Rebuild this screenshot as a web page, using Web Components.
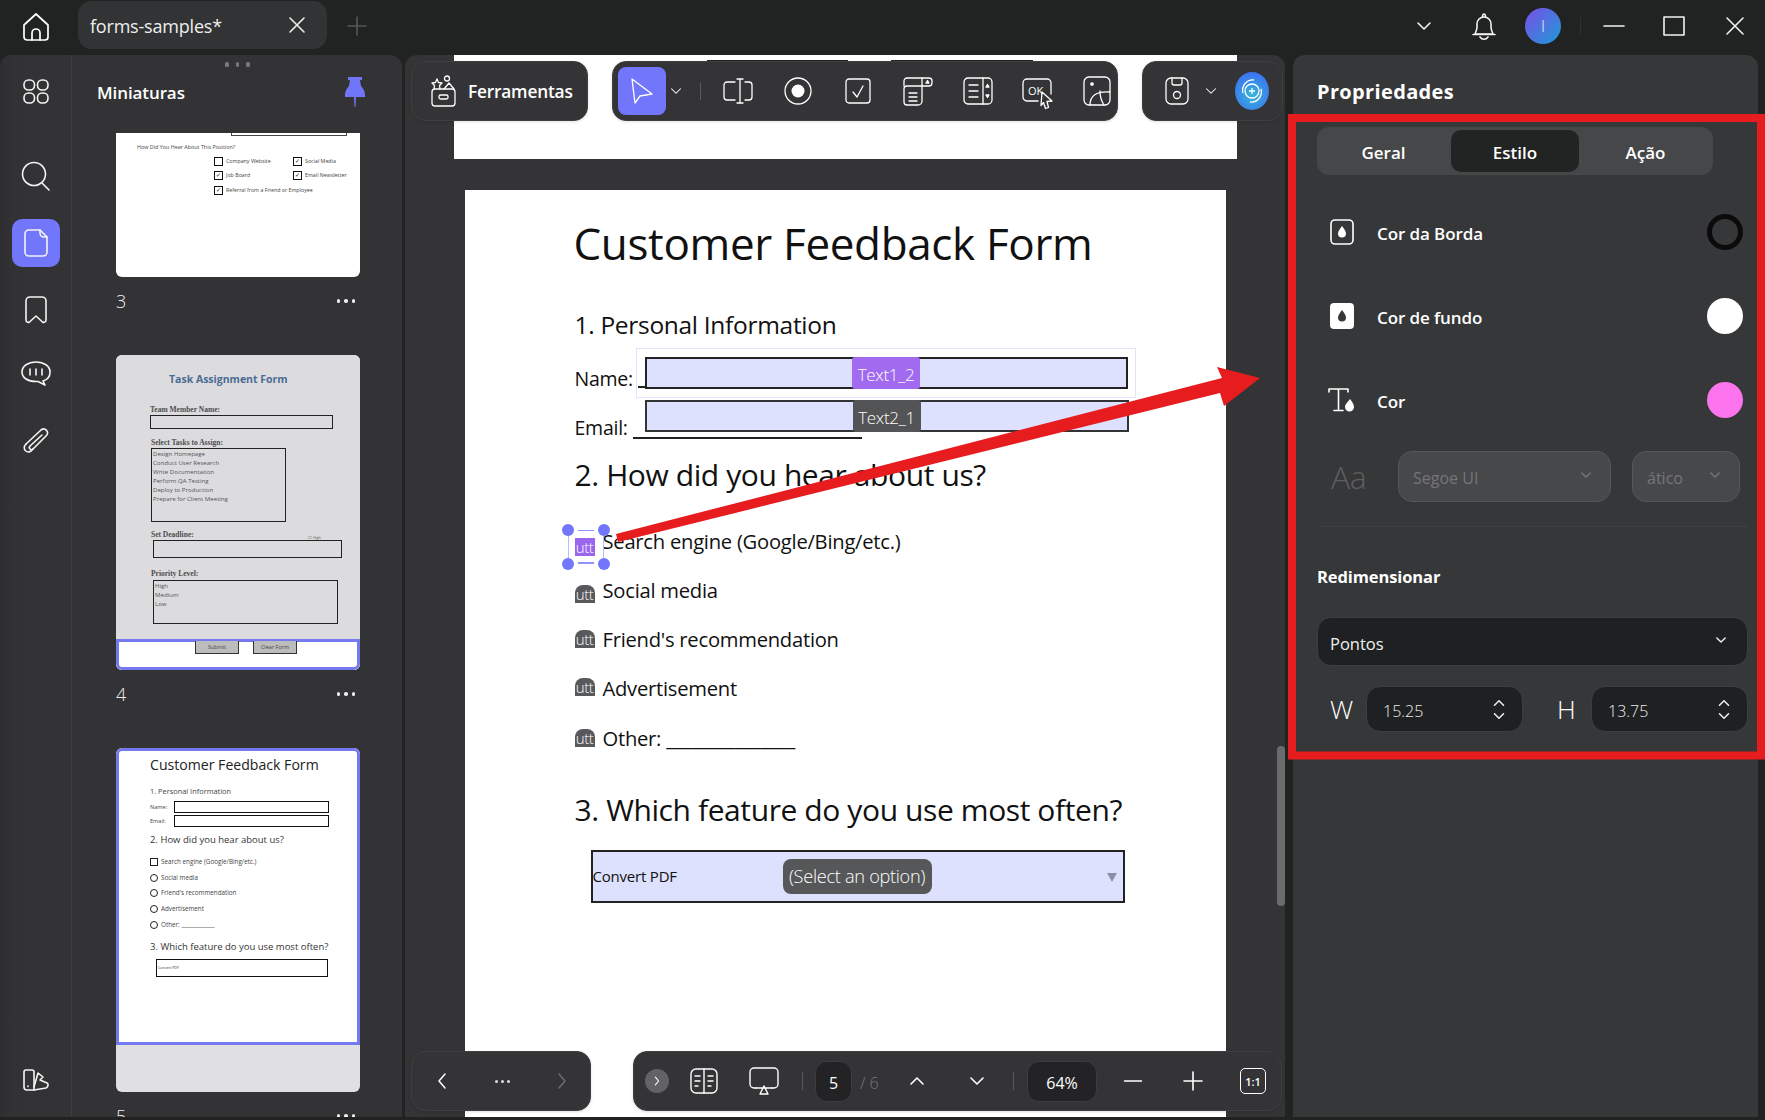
<!DOCTYPE html>
<html lang="pt">
<head>
<meta charset="utf-8">
<title>forms-samples</title>
<style>
  html, body { margin: 0; padding: 0; background: #212222; }
  body { font-family: "Open Sans", "Noto Sans", sans-serif; color: #fff; overflow: hidden; }
</style>
</head>
<body>
<app-shell></app-shell>
<script>
const ICONS = {
  home: [30, 30, '<path d="M3 13 15 2l12 11v12a3 3 0 0 1-3 3H6a3 3 0 0 1-3-3Z"/><path d="M11 28v-7a4 4 0 0 1 8 0v7"/>'],
  grid: [26, 25, '<rect x="1" y="1" width="10.5" height="10" rx="4.5"/><rect x="14.5" y="1" width="10.5" height="10" rx="4.5"/><rect x="1" y="14" width="10.5" height="10" rx="4.5"/><rect x="14.5" y="14" width="10.5" height="10" rx="4.5"/>'],
  search: [30, 30, '<circle cx="13" cy="13" r="11.5"/><path d="m21 22 7 7"/>'],
  page: [24, 28, '<path d="M5 1h11l7 7v15a4 4 0 0 1-4 4H5a4 4 0 0 1-4-4V5a4 4 0 0 1 4-4Z"/><path d="M16 1v3a4 4 0 0 0 4 4h3"/>'],
  bookmark: [22, 28, '<path d="M1 24V5a4 4 0 0 1 4-4h12a4 4 0 0 1 4 4v19c0 2-2 3-3.500 2L11 20l-6.500 6C3 27 1 26 1 24Z"/>'],
  comment: [30, 28, '<path d="M15 2c8 0 14 4 14 10 0 5-3 8-7 9l2 4-7-3.500h-2C7 21.500 1 18 1 12 1 6 7 2 15 2Z"/><path d="M9 9v6M15 9v6M21 9v6"/>'],
  clip: [28, 30, '<path d="m4 18 15-14c4-3 9 2 5 6L11 23c-2 2-5-1-3-3L20 9"/><path d="M4 18c-5 5 2 12 7 5"/>'],
  fan: [26, 26, '<path d="M3 3h6a2 2 0 0 1 2 2v18H4a3 3 0 0 1-3-3V5a2 2 0 0 1 2-2Z"/><path d="M11 20 15 6l5 4-3 3 7 3c2 1 1 4-1 5l-12 2"/><path d="M5 19v.5"/>'],
  x: [18, 18, '<path d="m2 2 14 14M16 2 2 16"/>'],
  plus: [20, 20, '<path d="M10 1v18M1 10h18"/>'],
  chevd: [16, 10, '<path d="m2 2 6 6 6-6"/>'],
  chevu: [16, 10, '<path d="m2 8 6-6 6 6"/>'],
  chevl: [10, 18, '<path d="M8 2 2 9l6 7"/>'],
  chevr: [10, 18, '<path d="m2 2 6 7-6 7"/>'],
  bell: [24, 30, '<path d="M3 23c1-2 2-4 2-7v-3a7 7 0 0 1 14 0v3c0 3 1 5 2 7Z"/><path d="M1 23.500h22M8 26c2 3 6 3 8 0M10.500 6c0-4 3-4 3 0"/>'],
  min: [22, 4, '<path d="M1 2h20"/>'],
  max: [22, 20, '<rect x="1" y="1" width="20" height="18"/>'],
  win: [18, 18, '<path d="m1 1 16 16M17 1 1 17"/>'],
  tools: [28, 32, '<rect x="3" y="14" width="23" height="17" rx="3"/><rect x="10" y="20" width="9" height="4" rx="1.500"/><path d="M8 4 9.500 7.500 13 8l-2.500 2.500.5 3.500M8 4 6.500 7.500 3 8l2.500 2.500L5 14"/><circle cx="18" cy="3.500" r="2.500"/><path d="m15 14 5-6 5 6"/>'],
  cursor: [24, 28, '<path d="M2 2 22 17 10 19 5 26Z"/>'],
  field: [32, 26, '<path d="M13 4H5a3 3 0 0 0-3 3v12a3 3 0 0 0 3 3h8M23 4h4a3 3 0 0 1 3 3v12a3 3 0 0 1-3 3h-4M18 1v24M15 1h6M15 25h6"/>'],
  radio: [28, 28, '<circle cx="14" cy="14" r="13"/><circle cx="14" cy="14" r="6.500" fill="currentColor" stroke="none"/>'],
  check: [26, 26, '<rect x="1" y="1" width="24" height="24" rx="3"/><path d="m8 14 4 5 6-11"/>'],
  combo: [30, 30, '<path d="M19 10H4a3 3 0 0 0-3 3v13a3 3 0 0 0 3 3h11a4 4 0 0 0 4-4V2h7a3 3 0 0 1 3 3v2a3 3 0 0 1-3 3h-7"/><path d="M1 10V5a3 3 0 0 1 3-3h15M6 17h8M6 21h8M6 25h8"/><path d="m23 7 1.500-2.500L26 7Z" fill="currentColor"/>'],
  list: [30, 28, '<rect x="1" y="1" width="28" height="26" rx="4"/><path d="M20 1v26M6 8h9M6 14h9M6 20h9"/><path d="m23 10 1.500-2.500L26 10ZM23 18l1.500 2.500L26 18Z" fill="currentColor"/>'],
  okbtn: [32, 32, '<path d="M16 23H5a4 4 0 0 1-4-4V5a4 4 0 0 1 4-4h20a4 4 0 0 1 4 4v11"/><text x="6" y="17" font-size="11" fill="currentColor" stroke="none" font-family="Open Sans, sans-serif">OK</text><path d="m20 14 10 9-5 .5 1.500 6-3 1-2-6-2.500 3Z" fill="#343436"/>'],
  image: [28, 30, '<rect x="1" y="1" width="26" height="28" rx="5"/><circle cx="9" cy="8" r="1.200" fill="currentColor"/><path d="M7 29c0-9 6-14 20-13M17 15c0 5 2 11 4 14"/>'],
  save: [24, 28, '<rect x="1" y="1" width="22" height="26" rx="5"/><path d="M7 1v5a2 2 0 0 0 2 2h6a2 2 0 0 0 2-2V1"/><circle cx="12" cy="18" r="3.500"/>'],
  book: [28, 26, '<rect x="1" y="1" width="26" height="24" rx="5"/><path d="M14 1v24M5 8h5M5 13h5M5 18h3M18 8h5M18 13h5M18 18h3"/>'],
  present: [30, 28, '<path d="M7 21H5a4 4 0 0 1-4-4V5a4 4 0 0 1 4-4h20a4 4 0 0 1 4 4v12a4 4 0 0 1-4 4h-2"/><path d="M7 21h16M15 19l4 8h-8Z"/>'],
  dropbox: [24, 26, '<rect x="1" y="1" width="22" height="24" rx="4"/><path d="M12 7c2 3 4 5 4 7.500a4 4 0 0 1-8 0C8 12 10 10 12 7Z" fill="currentColor" stroke="none"/>'],
  dropfill: [24, 26, '<rect x="0" y="0" width="24" height="26" rx="4" fill="currentColor" stroke="none"/><path d="M12 7c2 3 4 5 4 7.500a4 4 0 0 1-8 0C8 12 10 10 12 7Z" fill="#363738" stroke="none"/>'],
  textdrop: [28, 26, '<path d="M1 5V2h19v3M10.500 2v21M6 23.500h9"/><path d="M22 12c2 3 4 5 4 8a4.500 4.500 0 0 1-9 0c0-3 3-5 5-8Z" fill="currentColor" stroke="none"/>']
};

class UiIcon extends HTMLElement {
  connectedCallback() {
    const def = ICONS[this.getAttribute('name')];
    const sw = this.getAttribute('sw') || '1.6';
    const box = this.getAttribute('box');
    const root = this.attachShadow({ mode: 'open' });
    root.innerHTML = `
      <style>
        :host { display: inline-flex; align-items: center; justify-content: center; flex: none; ${box ? `width:${box}px;height:${box}px;` : ''} }
        svg { display: block; overflow: visible; fill: none; stroke: currentColor; stroke-width: ${sw}; stroke-linecap: round; stroke-linejoin: round; }
      </style>
      <svg width="${def[0]}" height="${def[1]}" viewBox="0 0 ${def[0]} ${def[1]}">${def[2]}</svg>`;
  }
}
customElements.define('ui-icon', UiIcon);

class TitleBar extends HTMLElement {
  constructor() {
    super();
    this.attachShadow({ mode: 'open' }).innerHTML = `
    <style>
      :host { display: flex; align-items: center; height: 55px; background: #212222; color: #fff; }
      .home { width: 78px; padding-left: 6px; box-sizing: border-box; display: flex; justify-content: center; padding-right: 12px; margin-top: -1px; }
      .tab { width: 249px; height: 48px; margin-top: -5px; box-sizing: border-box; background: #323334; border-radius: 14px; display: flex; align-items: center; padding: 2px 21px 0 12px; font-size: 18px; letter-spacing: -.2px; color: #eee; }
      .tab span { flex: 1; }
      .tab ui-icon { margin-top: -2px; }
      .add { color: #555758; margin-left: 20px; margin-top: 1px; }
      .right { margin-left: auto; display: flex; align-items: center; margin-top: -4px; color: #f2f2f2; }
      .avatar { width: 36px; height: 36px; border-radius: 50%; background: linear-gradient(135deg, #7a4fe8, #1d9ad6); display: flex; align-items: center; justify-content: center; font-size: 16px; font-weight: 300; margin: 0 0 0 29px; }
      .sep { width: 1px; height: 18px; background: #2f3030; margin-left: 19px; }
    </style>
    <div class="home"><ui-icon name="home" sw="1.700"></ui-icon></div>
    <div class="tab"><span>forms-samples*</span><ui-icon name="x"></ui-icon></div>
    <div class="add"><ui-icon name="plus"></ui-icon></div>
    <div class="right">
      <ui-icon name="chevd" style="margin-right:40px"></ui-icon>
      <ui-icon name="bell"></ui-icon>
      <div class="avatar">I</div>
      <div class="sep"></div>
      <ui-icon name="min" style="margin-left:22px"></ui-icon>
      <ui-icon name="max" style="margin-left:38px"></ui-icon>
      <ui-icon name="win" style="margin-left:41px;margin-right:21px"></ui-icon>
    </div>`;
  }
}
customElements.define('title-bar', TitleBar);

class ThumbItem extends HTMLElement {
  constructor() {
    super();
    const n = this.getAttribute('num');
    this.attachShadow({ mode: 'open' }).innerHTML = `
    <style>
      :host { display: block; width: 244px; margin-bottom: 30px; flex: none; }
      .sheet { border-radius: 6px; overflow: hidden; background: #fff; color: #333; height: var(--h); font-family: "Open Sans", sans-serif; }
      :host([flat]) .sheet { border-radius: 0 0 6px 6px; }
      .foot { height: 48px; display: flex; align-items: center; justify-content: space-between; font-size: 18px; font-weight: 300; color: #f0f0f0; }
      .dots { display: flex; gap: 4px; margin-right: 5px; }
      .dots i { width: 3.500px; height: 3.500px; border-radius: 50%; background: #eee; }
    </style>
    <div class="sheet" style="--h:${this.getAttribute('h')}px"><slot></slot></div>
    <div class="foot"><span>${n}</span><div class="dots"><i></i><i></i><i></i></div></div>`;
  }
}
customElements.define('thumb-item', ThumbItem);

class SidePanel extends HTMLElement {
  constructor() {
    super();
    this.attachShadow({ mode: 'open' }).innerHTML = `
    <style>
      :host { display: flex; width: 402px; flex: none; background: #333335; border-radius: 12px 12px 0 0; overflow: hidden; color: #fff; }
      .rail { width: 72px; box-sizing: border-box; border-right: 1px solid #3d3d3f; display: flex; flex-direction: column; align-items: center; padding: 12px 0 13px; background: linear-gradient(90deg, #2e2e30 0, #323234 12px, #333335 100%); }
      .rail ui-icon { color: #f4f4f4; }
      .on { width: 48px; height: 48px; border-radius: 10px; background: #7276fb; display: flex; align-items: center; justify-content: center; margin: 19px 0; }
      .col { flex: 1; display: flex; flex-direction: column; min-width: 0; position: relative; }
      .head { height: 78px; flex: none; display: flex; align-items: flex-start; justify-content: space-between; padding: 24px 36px 0 25px; box-sizing: border-box; }
      h2 { margin: 0; font-size: 17px; line-height: 28px; font-weight: 600; letter-spacing: -.1px; }
      .grip { position: absolute; left: 153px; top: 7px; display: flex; gap: 7px; }
      .grip i { width: 3.500px; height: 5px; border-radius: 1.500px; background: #77787a; }
      .list { flex: 1; overflow: hidden; padding-left: 44px; display: flex; flex-direction: column; }
      svg.pin { margin-top: -2px; }
    </style>
    <div class="rail">
      <ui-icon name="grid" box="48"></ui-icon>
      <ui-icon name="search" box="48" style="margin-top:37px"></ui-icon>
      <div class="on"><ui-icon name="page"></ui-icon></div>
      <ui-icon name="bookmark" box="48"></ui-icon>
      <ui-icon name="comment" box="48" style="margin-top:16px"></ui-icon>
      <ui-icon name="clip" box="48" style="margin-top:19px"></ui-icon>
      <ui-icon name="fan" box="48" style="margin-top:auto"></ui-icon>
    </div>
    <div class="col">
      <div class="grip"><i></i><i></i><i></i></div>
      <div class="head">
        <h2>Miniaturas</h2>
        <svg class="pin" width="22" height="30" viewBox="0 0 22 30" fill="#7176f8"><path d="M4 0h14v3h-2l1 6c2 2 4 5 4 9v2H12l-.5 10h-1L10 20H1v-2c0-4 2-7 4-9l1-6H4Z"/></svg>
      </div>
      <div class="list"><slot></slot></div>
    </div>`;
  }
}
customElements.define('side-panel', SidePanel);

class ThumbThree extends HTMLElement {
  constructor() {
    super();
    this.attachShadow({ mode: 'open' }).innerHTML = `
    <style>
      :host { display: block; font-size: 5.300px; color: #444; }
      .bar { height: 3px; width: 116px; margin-left: 115px; border: 1px solid #444; border-top: 0; box-sizing: border-box; background: #fff; }
      .q { margin: 7px 0 0 21px; line-height: 8px; font-size: 5.400px; }
      .g { margin: 6px 0 0 98px; display: grid; grid-template-columns: 79px 1fr; row-gap: 5px; }
      .o { display: flex; align-items: center; gap: 3px; line-height: 9px; white-space: nowrap; }
      .o.w { grid-column: span 2; margin-top: 1px; }
      .b { width: 7px; height: 7px; border: 1px solid #111; font-size: 6px; line-height: 7px; text-align: center; color: #111; flex: none; }
    </style>
    <div class="bar"></div>
    <div class="q">How Did You Hear About This Position?</div>
    <div class="g">
      <div class="o"><span class="b"></span>Company Website</div><div class="o"><span class="b">✓</span>Social Media</div>
      <div class="o"><span class="b">✓</span>Job Board</div><div class="o"><span class="b">✓</span>Email Newsletter</div>
      <div class="o w"><span class="b">✓</span>Referral from a Friend or Employee</div>
    </div>`;
  }
}
customElements.define('thumb-three', ThumbThree);

class ThumbFour extends HTMLElement {
  constructor() {
    super();
    this.attachShadow({ mode: 'open' }).innerHTML = `
    <style>
      :host { display: block; height: 100%; background: #dcdcdf; color: #444; box-sizing: border-box; position: relative; padding: 17px 0 0 34px; font-size: 5.800px; }
      .t { font-size: 10.500px; line-height: 14px; font-weight: 700; color: #4b6b94; padding-left: 19px; }
      .s { font: 700 7.500px/9px "Liberation Serif", serif; color: #4d4d4d; white-space: nowrap; }
      .f { border: 1.200px solid #222; box-sizing: border-box; line-height: 9.100px; padding-left: 1px; font-size: 6.100px; color: #555; }
      .strip { position: absolute; left: 0; right: 0; bottom: 0; height: 31px; background: #fff; border: 3px solid #7579ef; border-radius: 0 0 6px 6px; box-sizing: border-box; display: flex; padding: 0 0 0 76px; gap: 14px; }
      .strip b { width: 44px; height: 13px; margin-top: -1px; box-sizing: border-box; background: #bdbcbc; border: 1px solid #333; border-top: 0; font-weight: 400; font-size: 5.500px; line-height: 12px; text-align: center; color: #444; }
      .tiny { font-size: 3.600px; line-height: 5px; margin: -4px 0 -1px 158px; color: #555; }
    </style>
    <div class="t">Task Assignment Form</div>
    <div class="s" style="margin-top:18.500px">Team Member Name:</div>
    <div class="f" style="width:183px;height:14px;margin-top:1.500px"></div>
    <div class="s" style="margin-top:8.500px;margin-left:1px">Select Tasks to Assign:</div>
    <div class="f" style="width:135px;height:74px;margin:1.500px 0 0 1px">Design Homepage<br>Conduct User Research<br>Write Documentation<br>Perform QA Testing<br>Deploy to Production<br>Prepare for Client Meeting</div>
    <div class="s" style="margin-top:7.500px;margin-left:1px">Set Deadline:</div>
    <div class="tiny">☐ High</div>
    <div class="f" style="width:189px;height:18px;margin:1.500px 0 0 3px"></div>
    <div class="s" style="margin-top:10.500px;margin-left:1px">Priority Level:</div>
    <div class="f" style="width:185px;height:44px;margin:2.500px 0 0 3px">High<br>Medium<br>Low</div>
    <div class="strip"><b>Submit</b><b>Clear Form</b></div>`;
  }
}
customElements.define('thumb-four', ThumbFour);

class ThumbFive extends HTMLElement {
  constructor() {
    super();
    this.attachShadow({ mode: 'open' }).innerHTML = `
    <style>
      :host { display: block; height: 100%; background: #e0e0e2; color: #333; }
      .white { height: 297px; background: #fff; border: 3px solid #7579ef; border-radius: 6px 6px 0 0; box-sizing: border-box; padding: 4px 0 0 31px; }
      .t { font-size: 14.100px; line-height: 20px; color: #222; white-space: nowrap; }
      .h { font-size: 7.400px; line-height: 11px; margin-top: 11px; white-space: nowrap; color: #444; }
      .h2 { font-size: 9.500px; line-height: 14px; white-space: nowrap; color: #333; }
      .r { display: flex; align-items: center; font-size: 5.600px; white-space: nowrap; color: #444; height: 12px; }
      .f { width: 155px; height: 12px; border: 1.200px solid #111; box-sizing: border-box; margin-left: 8px; background: #fff; }
      .o { display: flex; align-items: center; gap: 3px; font-size: 6.300px; line-height: 16px; height: 15.700px; color: #444; white-space: nowrap; }
      .m { width: 6px; height: 6px; border: 1.500px solid #222; border-radius: 50%; flex: none; }
      .box { width: 172px; height: 18px; margin: 5px 0 0 6px; border: 1.200px solid #111; box-sizing: border-box; font-size: 3.600px; line-height: 15px; padding-left: 1px; }
    </style>
    <div class="white">
      <div class="t">Customer Feedback Form</div>
      <div class="h">1. Personal Information</div>
      <div class="r" style="margin-top:4px"><span style="width:16px">Name:</span><span class="f"></span></div>
      <div class="r" style="margin-top:2px"><span style="width:16px">Email:</span><span class="f"></span></div>
      <div class="h2" style="margin-top:6px">2. How did you hear about us?</div>
      <div style="margin-top:7px">
        <div class="o"><span class="m" style="border-radius:0"></span>Search engine (Google/Bing/etc.)</div>
        <div class="o"><span class="m"></span>Social media</div>
        <div class="o"><span class="m"></span>Friend's recommendation</div>
        <div class="o"><span class="m"></span>Advertisement</div>
        <div class="o"><span class="m"></span>Other: ____________</div>
      </div>
      <div class="h2" style="margin-top:8px">3. Which feature do you use most often?</div>
      <div class="box">Convert PDF</div>
    </div>`;
  }
}
customElements.define('thumb-five', ThumbFive);

class ToolPill extends HTMLElement {
  constructor() {
    super();
    this.attachShadow({ mode: 'open' }).innerHTML = `
    <style>
      :host { display: flex; align-items: center; height: 60px; box-sizing: border-box; background: #343436; border: 1px solid #3f3f41; border-radius: 14px; color: #fff; flex: none; box-shadow: 0 1px 3px rgba(0,0,0,.12); }
    </style>
    <slot></slot>`;
  }
}
customElements.define('tool-pill', ToolPill);

class DocToolbars extends HTMLElement {
  constructor() {
    super();
    this.attachShadow({ mode: 'open' }).innerHTML = `
    <style>
      :host { display: block; color: #fff; }
      .top, .bottom { position: absolute; left: 6px; display: flex; }
      .top { top: 6px; gap: 24px; }
      .bottom { bottom: 6px; }
      .ferr { font-size: 17.300px; font-weight: 600; letter-spacing: -.2px; margin-left: 11px; white-space: nowrap; }
      .act { width: 48px; height: 48px; background: #7276fb; border-radius: 8px; display: flex; align-items: center; justify-content: center; }
      .sep { width: 1px; height: 18px; background: #5a5a5c; flex: none; }
      .ai { width: 34px; height: 38px; border-radius: 50%; background: radial-gradient(circle at 50% 60%, #36b7d8, #3c79f0 70%, #3a63e8); margin-left: 14px; display: flex; align-items: center; justify-content: center; }
      .go { width: 24px; height: 24px; border-radius: 50%; background: #636365; display: flex; align-items: center; justify-content: center; margin-left: 11px; }
      .num { height: 41px; padding-top: 3px; background: #232325; border: 1px solid #3c3c3e; border-radius: 12px; box-sizing: border-box; display: flex; align-items: center; justify-content: center; font-size: 16px; flex: none; }
      .of { font-size: 16px; color: #77777a; margin-left: 8px; width: 21px; white-space: nowrap; font-weight: 300; padding-top: 3px; }
      .ratio { width: 26px; height: 26px; border: 1.500px solid #fff; border-radius: 5px; box-sizing: border-box; font-size: 11px; font-weight: 600; display: flex; align-items: center; justify-content: center; }
      .box40 { width: 40px; display: flex; justify-content: center; flex: none; }
      .dots { display: flex; gap: 3px; }
      .dots i { width: 3px; height: 3px; background: #ddd; border-radius: 50%; }
    </style>
    <div class="top">
      <tool-pill style="width:177px;padding-left:17px"><ui-icon name="tools" sw="1.300"></ui-icon><span class="ferr">Ferramentas</span></tool-pill>
      <tool-pill style="width:506px;padding-left:5px">
        <div class="act"><ui-icon name="cursor" sw="1.300"></ui-icon></div>
        <ui-icon name="chevd" sw="1.400" box="20" style="transform:scale(.75)"></ui-icon>
        <div class="sep" style="margin:0 17px 0 14px"></div>
        <ui-icon name="field" sw="1.300" box="40"></ui-icon>
        <ui-icon name="radio" sw="1.300" box="40" style="margin-left:20px"></ui-icon>
        <ui-icon name="check" sw="1.300" box="40" style="margin-left:20px"></ui-icon>
        <ui-icon name="combo" sw="1.300" box="40" style="margin-left:20px"></ui-icon>
        <ui-icon name="list" sw="1.300" box="40" style="margin-left:20px"></ui-icon>
        <ui-icon name="okbtn" sw="1.300" box="40" style="margin:6px 0 0 20px"></ui-icon>
        <ui-icon name="image" sw="1.300" box="40" style="margin-left:19px"></ui-icon>
      </tool-pill>
      <tool-pill style="width:141px;padding-left:22px">
        <ui-icon name="save" sw="1.300"></ui-icon>
        <ui-icon name="chevd" sw="1.400" box="20" style="transform:scale(.75);margin-left:12px"></ui-icon>
        <div class="ai"><svg width="26" height="28" viewBox="0 0 26 28" fill="none" stroke="#fff" stroke-width="1.300"><circle cx="13" cy="14" r="7"/><path d="M4 16C2 9 8 2 15 3M22 12c2 7-4 14-11 13M13 11v6M10 14h6"/></svg></div>
      </tool-pill>
    </div>
    <div class="bottom">
      <tool-pill style="width:180px;padding-left:10px">
        <div class="box40"><ui-icon name="chevl" sw="1.500"></ui-icon></div>
        <div class="box40" style="margin-left:20px"><div class="dots"><i></i><i></i><i></i></div></div>
        <div class="box40" style="margin-left:20px;color:#6d6d70"><ui-icon name="chevr" sw="1.500"></ui-icon></div>
      </tool-pill>
      <tool-pill style="width:649px;margin-left:42px;">
        <div class="go"><ui-icon name="chevr" sw="2" style="transform:scale(.55)"></ui-icon></div>
        <ui-icon name="book" sw="1.400" box="40" style="margin-left:15px"></ui-icon>
        <ui-icon name="present" sw="1.400" box="40" style="margin-left:20px"></ui-icon>
        <div class="sep" style="margin-left:18px"></div>
        <div class="num" style="width:37px;margin-left:12px">5</div>
        <div class="of">/ 6</div>
        <ui-icon name="chevu" sw="1.600" box="40" style="margin-left:16px"></ui-icon>
        <ui-icon name="chevd" sw="1.600" box="40" style="margin-left:20px"></ui-icon>
        <div class="sep" style="margin-left:16px"></div>
        <div class="num" style="width:70px;margin-left:13px">64%</div>
        <ui-icon name="min" sw="1.800" box="40" style="margin-left:16px;transform:scale(.85)"></ui-icon>
        <ui-icon name="plus" sw="1.600" box="40" style="margin-left:20px"></ui-icon>
        <div class="box40" style="margin-left:20px"><div class="ratio">1:1</div></div>
      </tool-pill>
    </div>`;
  }
}
customElements.define('doc-toolbars', DocToolbars);

class FormField extends HTMLElement {
  constructor() {
    super();
    this.attachShadow({ mode: 'open' }).innerHTML = `
    <style>
      :host { display: flex; justify-content: center; box-sizing: border-box; border: 2px solid #222; background: #dde1fd; }
      span { margin: -2px 0; padding-top: 3px; box-sizing: border-box; background: var(--chip); color: #fff; font-size: 17px; font-weight: 300; letter-spacing: -.3px; display: flex; align-items: center; justify-content: center; width: 68px; border-radius: 3px; }
    </style>
    <span><slot></slot></span>`;
  }
}
customElements.define('form-field', FormField);

class OptionRow extends HTMLElement {
  constructor() {
    super();
    const on = this.hasAttribute('active');
    this.attachShadow({ mode: 'open' }).innerHTML = `
    <style>
      :host { display: flex; align-items: center; height: 28px; font-size: 20.200px; letter-spacing: -.25px; position: relative; white-space: nowrap; }
      .m { width: 20px; height: 18px; margin: var(--dy, 0) 8px 0 0; background: ${on ? '#9a66ee' : '#58595b'}; color: #fff; border-radius: ${on ? '0' : '8px 8px 0 0'}; font-size: 15px; line-height: 19px; text-align: center; flex: none; letter-spacing: -.5px; font-weight: 300; }
      .sel { position: absolute; left: -7px; top: 3px; width: 36px; height: 34px; border-left: 1.500px solid #b9bcf8; border-right: 1.500px solid #b9bcf8; box-sizing: border-box; }
      .sel i { position: absolute; width: 12px; height: 12px; background: #7276fb; border-radius: 50%; }
      .sel b { position: absolute; left: 9px; right: 9px; height: 1.500px; background: #8f93fa; }
    </style>
    <span class="m">utt</span><slot></slot>
    ${on ? '<div class="sel"><i style="left:-7px;top:-6px"></i><i style="right:-7px;top:-6px"></i><i style="left:-7px;bottom:-6px"></i><i style="right:-7px;bottom:-6px"></i><b style="top:0"></b><b style="bottom:0"></b></div>' : ''}`;
  }
}
customElements.define('option-row', OptionRow);

class PdfPage extends HTMLElement {
  constructor() {
    super();
    this.attachShadow({ mode: 'open' }).innerHTML = `
    <style>
      :host { display: block; position: relative; width: 761px; height: 930px; margin: 31px auto 0; box-sizing: border-box; background: #fff; color: #111; padding: 28px 0 0 110px; font-family: "Open Sans", sans-serif; }
      h1 { margin: 0 0 0 -1px; font-weight: 400; font-size: 44px; line-height: 50px; letter-spacing: -.35px; white-space: nowrap; }
      h2 { margin: 42px 0 0; font-weight: 400; font-size: 24.500px; line-height: 30px; letter-spacing: -.3px; white-space: nowrap; }
      h3 { margin: 0; font-weight: 400; font-size: 30px; line-height: 40px; letter-spacing: -.4px; white-space: nowrap; }
      .l { font-size: 19.500px; line-height: 28px; letter-spacing: -.25px; white-space: nowrap; }
      .opts { display: flex; flex-direction: column; gap: 21.300px; margin-top: 31.500px; }
      .line { position: absolute; height: 1.500px; background: #222; }
      .field { position: absolute; }
      .halo { position: absolute; left: 171px; top: 158px; width: 500px; height: 50px; border: 1.500px solid #e2e4fb; box-sizing: border-box; }
      .drop { position: relative; display: flex; align-items: center; box-sizing: border-box; margin: 19.500px 0 0 16px; width: 534px; height: 53px; border: 2px solid #222; background: #dde1fd; font-size: 15px; letter-spacing: -.2px; }
      .chip { position: absolute; left: 190px; top: 7px; width: 149px; height: 35px; border-radius: 8px; background: #565759; color: #fff; font-size: 18.200px; font-weight: 300; display: flex; align-items: center; justify-content: center; letter-spacing: -.3px; white-space: nowrap; }
      .tri { position: absolute; right: 6px; top: 21px; width: 0; height: 0; border: 5.500px solid transparent; border-top: 9px solid #8c90a6; border-bottom: 0; }
    </style>
    <h1>Customer Feedback Form</h1>
    <h2>1. Personal Information</h2>
    <div class="l" style="margin-top:25px">Name:</div>
    <div class="l" style="margin-top:21px">Email:</div>
    <h3 style="margin-top:13px">2. How did you hear about us?</h3>
    <div class="opts">
      <option-row active style="--dy:12px">Search engine (Google/Bing/etc.)</option-row>
      <option-row style="--dy:8px">Social media</option-row>
      <option-row>Friend's recommendation</option-row>
      <option-row style="--dy:-2px">Advertisement</option-row>
      <option-row>Other: _______________</option-row>
    </div>
    <h3 style="margin-top:38.500px">3. Which feature do you use most often?</h3>
    <div class="drop">Convert PDF<div class="chip">(Select an option)</div><div class="tri"></div></div>
    <div class="line" style="left:168px;top:247px;width:229px"></div>
    <div class="line" style="left:173px;top:196px;width:7px"></div>
    <div class="halo"></div>
    <form-field class="field" style="left:180px;top:167px;width:483px;height:32px;--chip:#a26bef">Text1_2</form-field>
    <form-field class="field" style="left:180px;top:210px;width:484px;height:32px;--chip:#535456;border-color:#333">Text2_1</form-field>`;
  }
}
customElements.define('pdf-page', PdfPage);

class DocView extends HTMLElement {
  constructor() {
    super();
    this.attachShadow({ mode: 'open' }).innerHTML = `
    <style>
      :host { display: block; position: relative; width: 880px; margin-left: 3px; flex: none; background: #343436; border-radius: 12px 12px 0 0; overflow: hidden; }
      .prev { width: 783px; height: 104px; margin: 0 auto; background: #fff; position: relative; }
      .prev i { position: absolute; top: 5px; height: 1px; background: #222; }
      .bar { position: absolute; right: 0; top: 691px; width: 8px; height: 160px; background: #6a6b6c; border-radius: 4px; }
    </style>
    <div class="prev"><i style="left:253px;width:141px"></i><i style="left:437px;width:142px"></i></div>
    <pdf-page></pdf-page>
    <div class="bar"></div>
    <doc-toolbars></doc-toolbars>`;
  }
}
customElements.define('doc-view', DocView);

class PropRow extends HTMLElement {
  constructor() {
    super();
    this.attachShadow({ mode: 'open' }).innerHTML = `
    <style>
      :host { display: flex; align-items: center; height: 84px; padding: 0 5px 0 12px; font-size: 17px; font-weight: 600; letter-spacing: -.1px; }
      ui-icon { width: 26px; margin-right: 22px; }
      span { padding-top: 2px; }
      .s { width: 36px; height: 36px; border-radius: 50%; margin-left: auto; box-sizing: border-box; }
    </style>
    <ui-icon name="${this.getAttribute('icon')}"></ui-icon><span><slot></slot></span>
    <div class="s" style="${this.getAttribute('swatch')}"></div>`;
  }
}
customElements.define('prop-row', PropRow);

class SelectBox extends HTMLElement {
  constructor() {
    super();
    this.attachShadow({ mode: 'open' }).innerHTML = `
    <style>
      :host { display: flex; align-items: center; justify-content: space-between; box-sizing: border-box; border-radius: 14px; border: 1px solid var(--b); background: var(--bg); color: var(--c); font-size: var(--fs, 16px); padding: 0 16px 0 14px; overflow: hidden; }
      span { white-space: nowrap; padding-top: var(--tp, 2px); }
      ui-icon { margin-top: -4px; transform: scale(.7); }
    </style>
    <span><slot></slot></span><ui-icon name="chevd" sw="2"></ui-icon>`;
  }
}
customElements.define('select-box', SelectBox);

class NumBox extends HTMLElement {
  constructor() {
    super();
    this.attachShadow({ mode: 'open' }).innerHTML = `
    <style>
      :host { display: flex; align-items: center; justify-content: space-between; box-sizing: border-box; width: 157px; height: 46px; background: #1f2021; border: 1px solid #3d3e3f; border-radius: 14px; padding: 0 15px 0 16px; font-size: 16px; color: #eee; }
      span { padding-top: 3px; }
      .a { display: flex; flex-direction: column; gap: 5px; }
      ui-icon { height: 8px; transform: scale(.75); }
    </style>
    <span><slot></slot></span><div class="a"><ui-icon name="chevu" sw="2"></ui-icon><ui-icon name="chevd" sw="2"></ui-icon></div>`;
  }
}
customElements.define('num-box', NumBox);

class PropsPanel extends HTMLElement {
  constructor() {
    super();
    this.attachShadow({ mode: 'open' }).innerHTML = `
    <style>
      :host { display: block; width: 465px; margin-left: 8px; flex: none; box-sizing: border-box; background: #363738; border-radius: 12px 12px 0 0; padding: 22px 10px 0 24px; color: #fff; }
      h1 { margin: 0; font-size: 20px; line-height: 30px; font-weight: 700; letter-spacing: .35px; }
      .tabs { display: grid; grid-template-columns: 131px 128px 1fr; width: 396px; height: 48px; margin-top: 20px; box-sizing: border-box; padding: 3px; background: #464748; border-radius: 12px; font-size: 17px; font-weight: 600; margin-bottom: 15px; }
      .tabs div { display: flex; align-items: center; justify-content: center; padding-top: 3px; box-sizing: border-box; height: 42px; }
      .tabs .on { background: #222323; border-radius: 10px; }
      .font { display: flex; align-items: center; margin-top: 9px; height: 51px; --b: #555657; --bg: #47484a; --c: #757678; }
      .aa { width: 81px; padding-left: 14px; box-sizing: border-box; font-size: 32px; font-weight: 300; color: #5e5f60; letter-spacing: -.5px; }
      .rule { height: 1px; background: #3e3f40; margin-top: 24px; }
      h2 { margin: 38px 0 -1px; font-size: 16.500px; line-height: 24px; font-weight: 700; letter-spacing: -.1px; }
      .wh { display: flex; align-items: center; margin-top: 20px; font-size: 26px; font-weight: 300; }
      .wh b { font-weight: 300; }
    </style>
    <h1>Propriedades</h1>
    <div class="tabs"><div style="padding-right:4px">Geral</div><div class="on">Estilo</div><div style="padding-left:2px">Ação</div></div>
    <prop-row icon="dropbox" swatch="border:5px solid #0b0b0b">Cor da Borda</prop-row>
    <prop-row icon="dropfill" swatch="background:#fff">Cor de fundo</prop-row>
    <prop-row icon="textdrop" swatch="background:#fb74ee">Cor</prop-row>
    <div class="font">
      <div class="aa">Aa</div>
      <select-box style="width:213px;height:51px">Segoe UI</select-box>
      <select-box style="width:108px;height:51px;margin-left:21px;">ático</select-box>
    </div>
    <div class="rule"></div>
    <h2>Redimensionar</h2>
    <select-box style="height:49px;margin-top:29px;--bg:#1f2021;--b:#3d3e3f;--c:#f0f0f0;padding:0 18px 0 12px;--fs:16.500px;--tp:4px">Pontos</select-box>
    <div class="wh">
      <b style="width:49px;padding-left:13px;box-sizing:border-box">W</b>
      <num-box>15.25</num-box>
      <b style="width:68px;padding-left:34px;box-sizing:border-box">H</b>
      <num-box>13.75</num-box>
    </div>`;
  }
}
customElements.define('props-panel', PropsPanel);

class RedMarkup extends HTMLElement {
  constructor() {
    super();
    this.attachShadow({ mode: 'open' }).innerHTML = `
    <style>
      :host { display: block; position: absolute; inset: 0; pointer-events: none; }
    </style>
    <svg width="1765" height="1120" viewBox="0 0 1765 1120">
      <rect x="1292" y="118" width="469" height="637.500" fill="none" stroke="#e61c1f" stroke-width="8"/>
      <polygon fill="#e61c1f" points="616,534 1222,378 1217,367 1260,378 1224,406 1220,393 618,542"/>
    </svg>`;
  }
}
customElements.define('red-markup', RedMarkup);

class AppShell extends HTMLElement {
  constructor() {
    super();
    this.attachShadow({ mode: 'open' }).innerHTML = `
    <style>
      :host { display: flex; flex-direction: column; position: relative; width: 1765px; height: 1120px; overflow: hidden; background: #212222; }
      .main { display: flex; flex: 1; min-height: 0; margin-bottom: 3px; }
    </style>
    <title-bar></title-bar>
    <div class="main">
      <side-panel>
        <thumb-item num="3" h="144" flat><thumb-three></thumb-three></thumb-item>
        <thumb-item num="4" h="315"><thumb-four></thumb-four></thumb-item>
        <thumb-item num="5" h="344"><thumb-five></thumb-five></thumb-item>
      </side-panel>
      <doc-view></doc-view>
      <props-panel></props-panel>
    </div>
    <red-markup></red-markup>`;
  }
}
customElements.define('app-shell', AppShell);
</script>
</body>
</html>
